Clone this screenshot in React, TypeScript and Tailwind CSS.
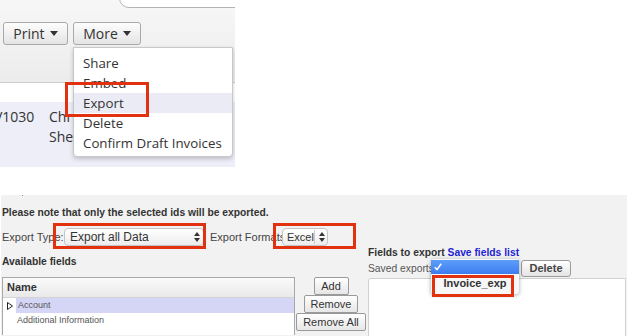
import React from 'react'

const Caret = () => (
  <svg width="8" height="5" viewBox="0 0 8 5" className="ml-[5px]">
    <path d="M0 0h8L4 5z" fill="#333" />
  </svg>
)

const UpDown = () => (
  <svg width="6" height="10" viewBox="0 0 6 10">
    <path d="M0 4h6L3 0z M0 6h6L3 10z" fill="#333" />
  </svg>
)

const ToolBtn = ({ label, w }: { label: string; w: string }) => (
  <div
    className={`${w} h-[23px] flex items-center justify-center rounded-[3px] border border-[#a9a9a9] bg-gradient-to-b from-[#fdfdfd] to-[#e4e4e4] text-[14px] text-[#333]`}
  >
    {label}
    <Caret />
  </div>
)

const SmallBtn = ({ label, w }: { label: string; w: string }) => (
  <div
    className={`${w} h-[18px] flex items-center justify-center whitespace-nowrap rounded-[2px] border border-[#9a9a9a] bg-gradient-to-b from-[#ffffff] to-[#e6e6e6] text-[11px] text-[#333]`}
  >
    {label}
  </div>
)

const RedBox = ({ className }: { className: string }) => (
  <div className={`absolute border-[3px] border-[#e2310f] ${className}`} />
)

export default function App() {
  return (
    <div className="w-[631px] h-[336px] bg-white overflow-hidden font-['Open_Sans',sans-serif]">
      {/* invoice list with More menu */}
      <div className="relative w-[235px] h-[167px] overflow-hidden">
        <div className="relative h-[83px] border-b border-[#cdcdcd] bg-gradient-to-b from-[#f7f7f7] to-[#ececec]">
          <div className="absolute left-[119px] top-[-12px] w-[140px] h-[20px] rounded-bl-[10px] border border-[#b3b3b3] bg-white" />
          <div className="flex gap-[5px] pt-[22px] pl-[3px]">
            <ToolBtn label="Print" w="w-[65px]" />
            <ToolBtn label="More" w="w-[68px]" />
          </div>
        </div>
        <div className="h-[19px] bg-white" />
        <div className="h-[65px] bg-[#eeeef8] text-[14px] leading-[20px] text-[#333] pt-[5px] whitespace-nowrap">
          <div className="flex">
            <span className="ml-[-6px] w-[55px]">V1030</span>
            <span>Christopher</span>
          </div>
          <div className="pl-[49px]">Sherman</div>
        </div>

        <div className="absolute left-[73px] top-[47px] w-[160px] h-[110px] rounded-b-[4px] border border-[#c8c8c8] bg-white shadow-[0_2px_4px_rgba(0,0,0,0.2)] pt-[5px] text-[13.3px] leading-[20px] text-[#333] whitespace-nowrap">
          <div className="pl-[9px]">Share</div>
          <div className="pl-[9px]">Embed</div>
          <div className="pl-[9px] bg-[#ebebf5]">Export</div>
          <div className="pl-[9px]">Delete</div>
          <div className="pl-[9px]">Confirm Draft Invoices</div>
        </div>
        <RedBox className="left-[65px] top-[82px] w-[84px] h-[35px]" />
      </div>

      {/* export dialog */}
      <div className="mt-[28px] ml-[1px] w-[626px] h-[141px] bg-[#f2f2f2] font-['Liberation_Sans',sans-serif] text-[#333] whitespace-nowrap">
        <div className="pl-[21px] h-[1px]">
          <div className="w-[1px] h-[1px] bg-[#888]" />
        </div>
        <div className="pt-[11px] pl-[1px] text-[10.3px] leading-[12px] font-bold">
          Please note that only the selected ids will be exported.
        </div>

        <div className="relative mt-[8px] h-[20px] flex items-center pl-[1px] text-[11px] text-[#444]">
          <span className="w-[62px]">Export Type:</span>
          <div className="w-[140px] h-[18px] flex items-center justify-between rounded-[4px] border border-[#c4c4c4] bg-gradient-to-b from-white to-[#ececec] pl-[5px] pr-[3px] text-[12px] text-[#333]">
            <span>Export all Data</span>
            <UpDown />
          </div>
          <span className="ml-[6px] w-[72px]">Export Formats:</span>
          <div className="w-[46px] h-[18px] flex items-center rounded-[4px] border border-[#c4c4c4] bg-gradient-to-b from-white to-[#ececec] text-[11px] text-[#333]">
            <span className="pl-[4px] w-[32px] border-r border-[#ccc] leading-[14px]">Excel</span>
            <span className="pl-[4px] flex"><UpDown /></span>
          </div>
          <RedBox className="left-[272px] top-[-4px] w-[83px] h-[26px]" />
          <RedBox className="left-[52px] top-[-4px] w-[153px] h-[26px]" />
        </div>

        <div className="flex">
          <div className="w-[367px]">
            <div className="mt-[9px] pl-[1px] text-[10.3px] leading-[12px] font-bold">Available fields</div>
            <div className="mt-[9px] flex">
              <div className="ml-[1px] w-[293px] h-[58px] border-l border-t border-r border-[#a8a8a8] bg-white">
                <div className="h-[20px] flex items-center pl-[4px] text-[11px] font-bold bg-gradient-to-b from-[#fafafa] to-[#e9e9e9] border-b border-[#d4d4d4]">
                  Name
                </div>
                <div className="h-[15px] flex items-center">
                  <div className="w-[13px] flex justify-center">
                    <svg width="6" height="8" viewBox="0 0 6 8">
                      <path d="M0.5 0.5L5.5 4L0.5 7.5z" fill="none" stroke="#222" strokeWidth="1" />
                    </svg>
                  </div>
                  <div className="flex-1 h-full bg-[#d5d5f6] pl-[2px] text-[9px] leading-[15px] text-[#555]">Account</div>
                </div>
                <div className="h-[15px] pl-[14px] text-[9px] leading-[15px] text-[#555]">Additional Information</div>
              </div>
              <div className="w-[72px] flex flex-col items-center">
                <SmallBtn label="Add" w="w-[35px]" />
                <SmallBtn label="Remove" w="w-[54px]" />
                <SmallBtn label="Remove All" w="w-[70px]" />
              </div>
            </div>
          </div>

          <div className="flex-1">
            <div className="text-[10.3px] leading-[12px] font-bold">
              Fields to export <span className="text-[#2323d4]">Save fields list</span>
            </div>
            <div className="relative mt-[1px] h-[17px] flex items-center text-[10.3px] text-[#555]">
              <span className="w-[63px]">Saved exports</span>
              <div className="w-[88px] h-[15px] rounded-[3px] border border-[#bbb] bg-white" />
              <div className="ml-[2px] w-[50px] h-[17px] flex items-center justify-center rounded-[3px] border border-[#9a9a9a] bg-gradient-to-b from-white to-[#e4e4e4] text-[11px] font-bold text-[#444]">
                Delete
              </div>
              <div className="absolute left-[63px] top-[-1px] w-[88px] h-[35px] rounded-[3px] bg-[#f7f7f7] shadow-[0_1px_4px_rgba(0,0,0,0.35)]">
                <div className="h-[14px] mt-[1px] flex items-center pl-[3px] bg-gradient-to-b from-[#5d9ef9] to-[#3c7cf0]">
                  <svg width="8" height="8" viewBox="0 0 8 8">
                    <path d="M0.8 4.2L3 6.6L7.2 0.8" fill="none" stroke="#fff" strokeWidth="1.6" />
                  </svg>
                </div>
                <div className="h-[19px] flex items-center justify-center text-[11px] font-bold text-[#333]">Invoice_exp</div>
              </div>
              <RedBox className="left-[64px] top-[15px] w-[82px] h-[22px]" />
            </div>
            <div className="mt-[1px] w-[258px] h-[60px] rounded-tl-[3px] border border-[#d0d0d0] bg-white" />
          </div>
        </div>
      </div>
    </div>
  )
}
